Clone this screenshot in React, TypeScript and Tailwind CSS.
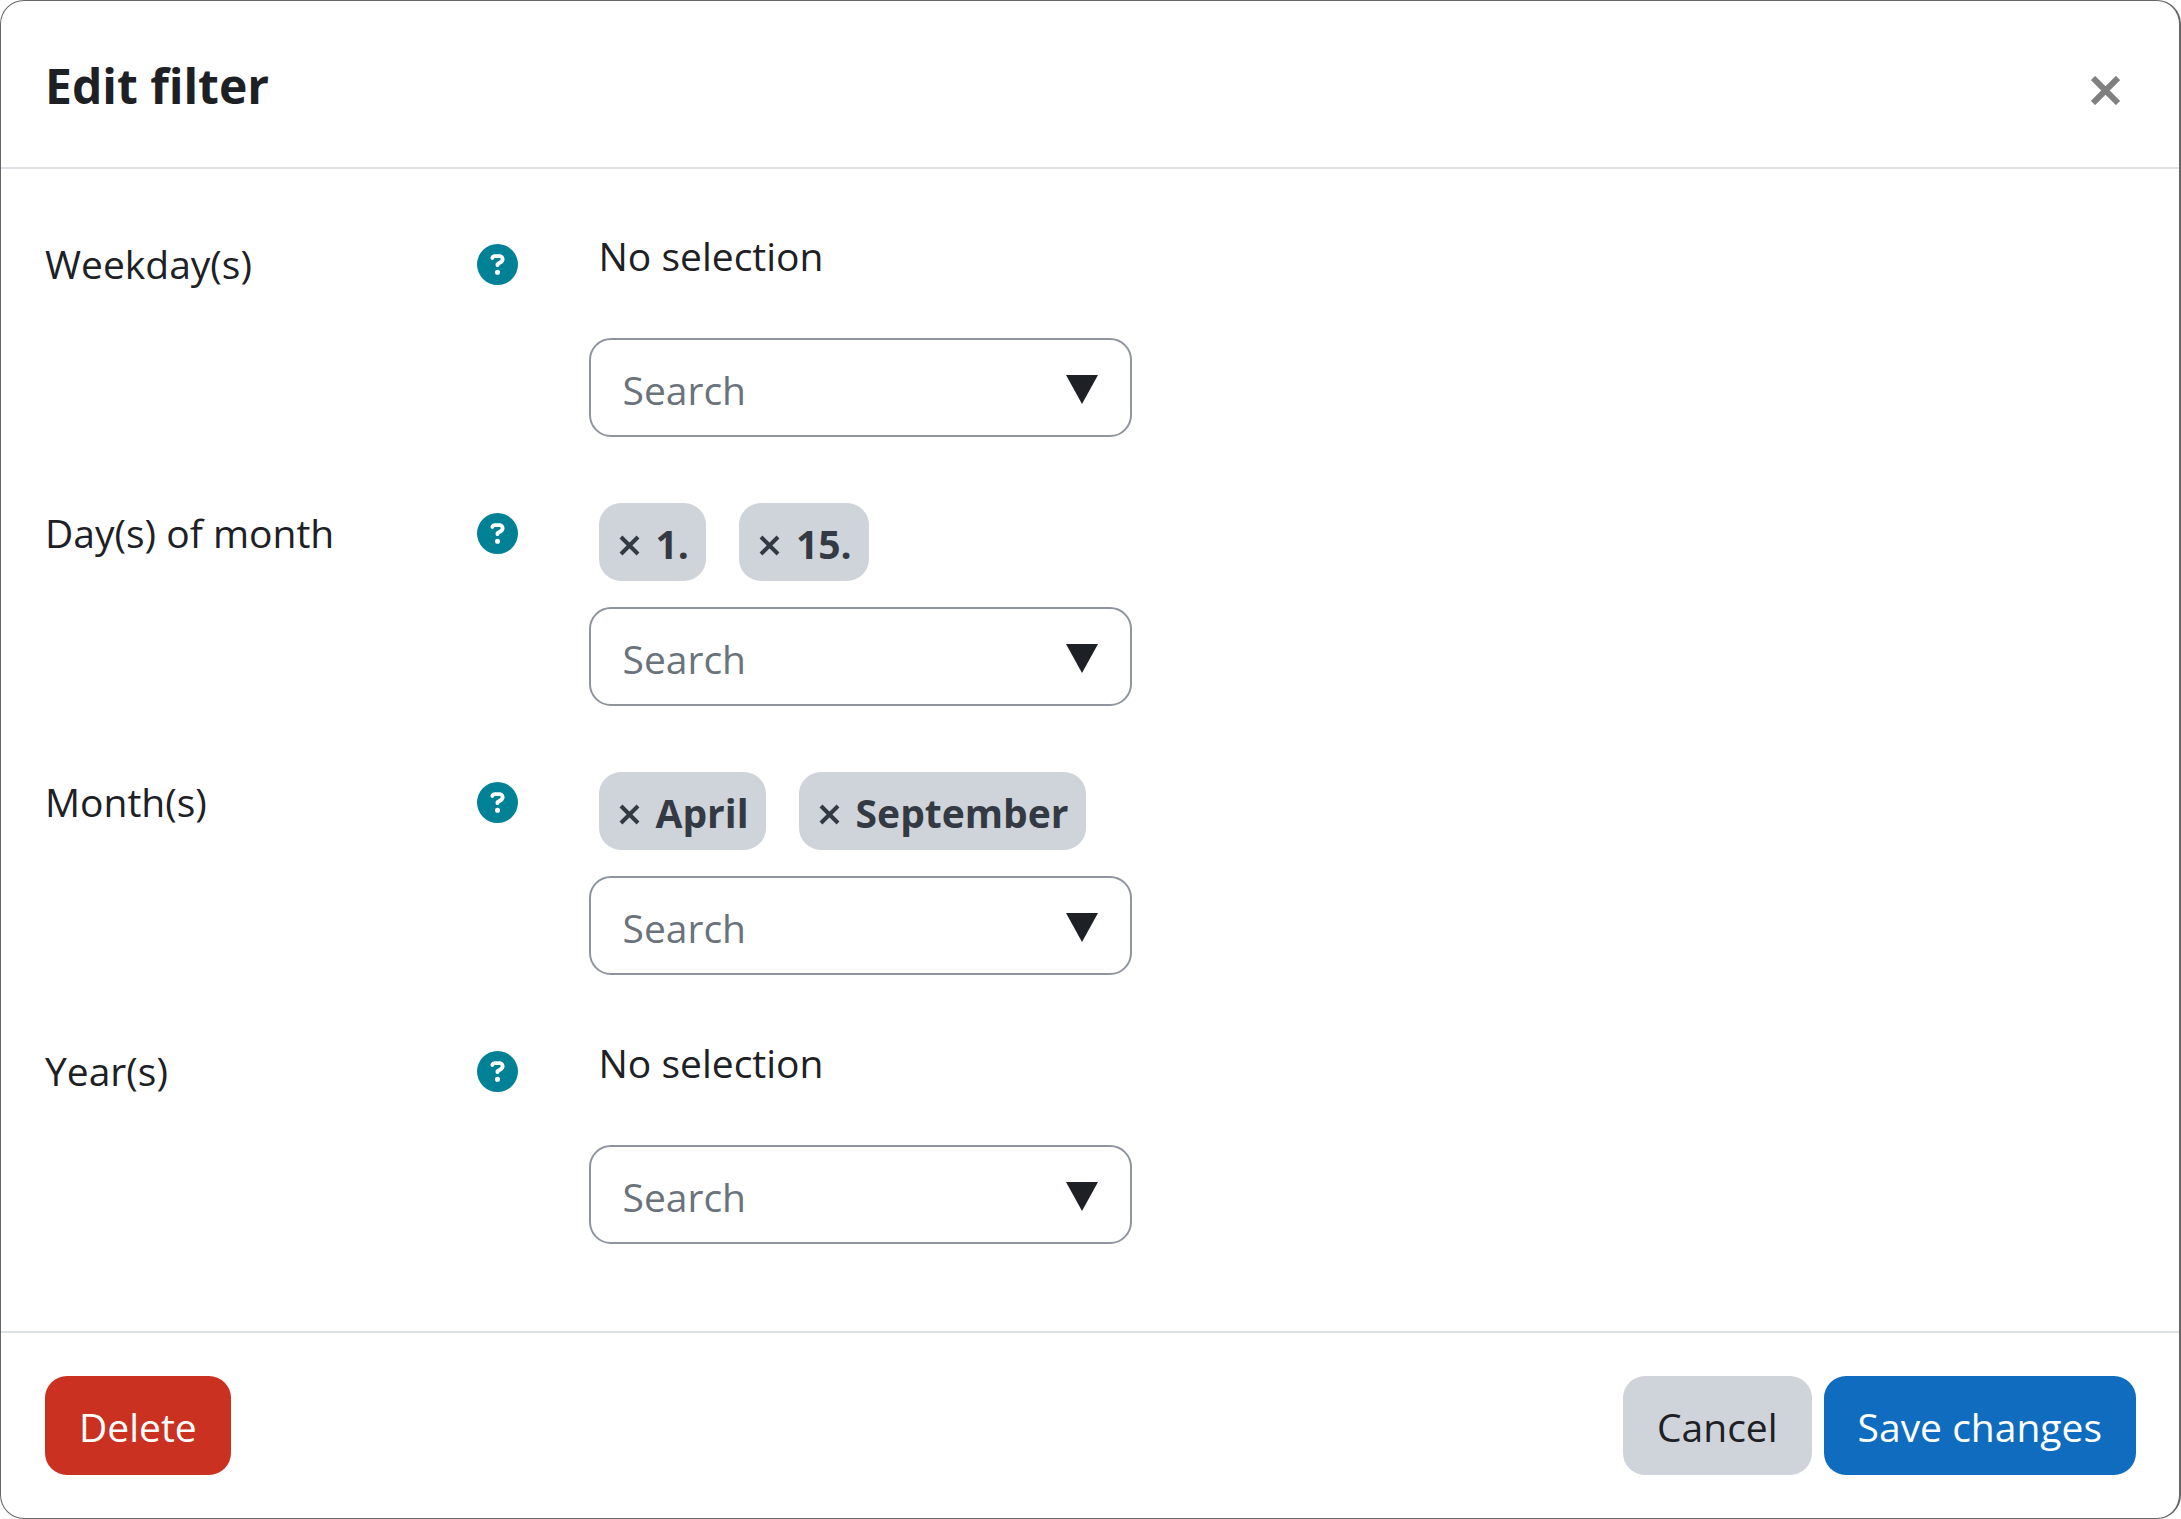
import React, { useId } from "react";

type Field = { label: string; tags: string[] };

const fields: Field[] = [
  { label: "Weekday(s)", tags: [] },
  { label: "Day(s) of month", tags: ["1.", "15."] },
  { label: "Month(s)", tags: ["April", "September"] },
  { label: "Year(s)", tags: [] },
];

function HelpIcon() {
  return (
    <svg viewBox="0 0 512 512" className="size-[41px]" fill="#008196" aria-hidden="true">
      <path d="M256 512A256 256 0 1 0 256 0a256 256 0 1 0 0 512zM169.8 165.3c7.9-22.3 29.1-37.3 52.8-37.3l58.3 0c34.9 0 63.1 28.3 63.1 63.1c0 22.6-12.1 43.5-31.7 54.8L280 264.4c-.2 13-10.9 23.6-24 23.6c-13.3 0-24-10.7-24-24l0-13.5c0-8.6 4.6-16.5 12.1-20.8l44.3-25.4c4.7-2.7 7.6-7.7 7.6-13.1c0-8.4-6.8-15.1-15.1-15.1l-58.3 0c-3.4 0-6.4 2.1-7.5 5.3l-.4 1.2c-4.4 12.5-18.2 19-30.6 14.6s-19-18.2-14.6-30.6l.4-1.2zM224 352a32 32 0 1 1 64 0 32 32 0 1 1 -64 0z" />
    </svg>
  );
}

function Tag({ text }: { text: string }) {
  return (
    <button
      type="button"
      className="flex h-[78px] items-center gap-3 rounded-[22px] bg-[#ced4da] px-[17px] pt-1 text-[39px] font-bold text-[#343a43]"
    >
      <svg viewBox="0 0 28 28" className="mt-1 size-7" stroke="currentColor" strokeWidth="4" aria-hidden="true">
        <path d="M5 5 L22 22 M22 5 L5 22" />
      </svg>
      {text}
    </button>
  );
}

function FilterRow({ label, tags }: Field) {
  const id = useId();
  return (
    <div className="flex h-[269px]">
      <div className="flex w-1/4 items-start justify-between pr-7 pl-11">
        <label htmlFor={id} className="leading-[60px]">
          {label}
        </label>
        <button type="button" aria-label={`Help with ${label}`} className="mt-[10px]">
          <HelpIcon />
        </button>
      </div>
      <div className="w-3/4 pr-11 pl-[43px]">
        <div className="flex h-[104px] items-start gap-[33px] pl-[10px]">
          {tags.length === 0 ? (
            <span className="-mt-2 leading-[60px]">No selection</span>
          ) : (
            tags.map((t) => <Tag key={t} text={t} />)
          )}
        </div>
        <div className="flex h-[99px] w-[543px] max-w-full items-center rounded-[22px] border-2 border-[#8f959e] px-8">
          <input
            id={id}
            type="text"
            placeholder="Search"
            className="h-full w-full min-w-0 pt-1 outline-none placeholder:text-[#6a737b]"
          />
          <button type="button" aria-label={`Show ${label} options`} className="pt-1">
            <svg viewBox="0 0 32 29" className="h-[29px] w-8" fill="#1d2125" aria-hidden="true">
              <path d="M0 0H32L16 29Z" />
            </svg>
          </button>
        </div>
      </div>
    </div>
  );
}

export default function App() {
  return (
    <div
      role="dialog"
      aria-labelledby="title"
      className="flex min-h-screen flex-col rounded-[24px] border border-r-2 border-[#666666] bg-white font-['Open_Sans','Noto_Sans',sans-serif] text-[39px] text-[#1d2125]"
    >
      <header className="flex h-[168px] items-center justify-between border-b-2 border-[#dee2e6] px-11">
        <h1 id="title" className="pt-1 text-[48px] leading-[60px] font-bold">
          Edit filter
        </h1>
        <button type="button" aria-label="Close" className="mt-3 mr-[15px]">
          <svg viewBox="0 0 29 29" className="size-[29px]" stroke="#808080" strokeWidth="6" aria-hidden="true">
            <path d="M2 2 L27 27 M27 2 L2 27" />
          </svg>
        </button>
      </header>
      <main className="flex-1 pt-[65px]">
        {fields.map((f) => (
          <FilterRow key={f.label} {...f} />
        ))}
      </main>
      <footer className="flex items-center justify-between border-t-2 border-[#dee2e6] pr-[43px] pl-11 py-[43px]">
        <button type="button" className="h-[99px] rounded-[22px] bg-[#ca3120] px-[34px] pt-1 text-white">
          Delete
        </button>
        <div className="flex gap-3">
          <button type="button" className="h-[99px] rounded-[22px] bg-[#ced4da] px-[34px] pt-1">
            Cancel
          </button>
          <button type="button" className="h-[99px] rounded-[22px] bg-[#0f6cbf] px-[34px] pt-1 text-white">
            Save changes
          </button>
        </div>
      </footer>
    </div>
  );
}
